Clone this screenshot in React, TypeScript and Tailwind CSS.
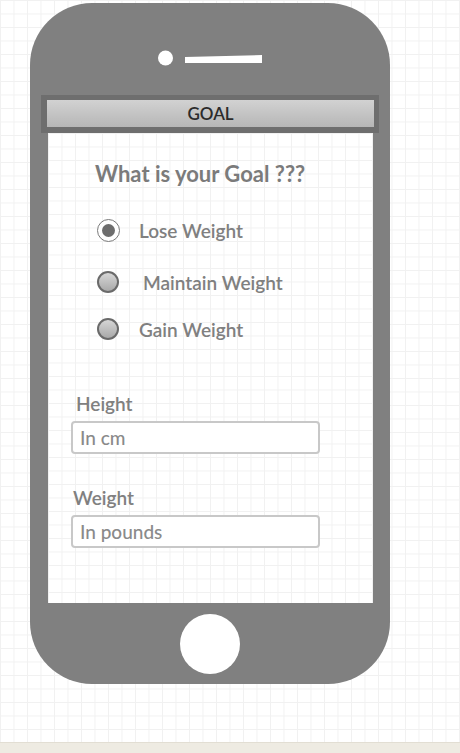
import React from "react";

const gridBg =
  "bg-[linear-gradient(to_right,#f1f1f1_1px,transparent_1px),linear-gradient(to_bottom,#f1f1f1_1px,transparent_1px)] bg-[size:13.5px_13.5px]";

function Radio({ checked }: { checked?: boolean }) {
  if (checked) {
    return (
      <div className="w-[23px] h-[23px] rounded-full border-[1.5px] border-[#7a7a7a] bg-white flex items-center justify-center shrink-0">
        <div className="w-[13px] h-[13px] rounded-full bg-[#6d6d6d]" />
      </div>
    );
  }
  return (
    <div className="w-[22px] h-[22px] rounded-full border-2 border-[#6a6a6a] bg-[linear-gradient(to_bottom,#d6d6d6,#a9a9a9)] shrink-0" />
  );
}

export default function App() {
  return (
    <div className="w-[460px] h-[753px] flex flex-col bg-white overflow-hidden" style={{ fontFamily: "Lato, 'Open Sans', sans-serif" }}>
      <div className={`h-[742px] ${gridBg} pt-[3px] pl-[30px]`}>
        <div className="w-[360px] h-[681px] rounded-[62px] bg-[#808080] flex flex-col">
          <div className="h-[92px] relative">
            <svg width="360" height="92" className="block">
              <circle cx="135.5" cy="55" r="7.5" fill="#fff" />
              <polygon points="155,54 232,52 232,60 155,60" fill="#fff" />
            </svg>
          </div>
          <div className="mx-[11px] h-[38px] bg-[#6e6e6e] pt-[5px] pb-[6px] pl-[6px] pr-[5px]">
            <div className="h-full bg-[linear-gradient(to_bottom,#d2d2d2,#b6b6b6)] flex items-center justify-center text-[17px] font-semibold text-[#2b2b2b] leading-none">
              GOAL
            </div>
          </div>
          <div className={`ml-[18px] mr-[17px] h-[470px] bg-white ${gridBg} flex flex-col`}>
            <div className="pl-[47px] pt-[30px] text-[22px] font-bold text-[#7b7b7b] leading-none">
              What is your Goal ???
            </div>
            <div className="pl-[49px] mt-[33px] flex items-center h-[24px]">
              <Radio checked />
              <span className="ml-[19px] text-[19px] font-semibold text-[#808080] leading-none">Lose Weight</span>
            </div>
            <div className="pl-[49px] mt-[28px] flex items-center h-[24px]">
              <Radio />
              <span className="ml-[24px] text-[19px] font-semibold text-[#808080] leading-none">Maintain Weight</span>
            </div>
            <div className="pl-[49px] mt-[23px] flex items-center h-[24px]">
              <Radio />
              <span className="ml-[20px] text-[19px] font-semibold text-[#808080] leading-none">Gain Weight</span>
            </div>
            <div className="pl-[28px] mt-[53px] text-[19px] font-semibold text-[#808080] leading-none">Height</div>
            <div className="ml-[23px] mt-[8px] w-[249px] h-[33px] border-2 border-[#c8c8c8] rounded-[4px] bg-white flex items-center pl-[7px] text-[19px] font-medium text-[#8a8a8a] leading-none">
              In cm
            </div>
            <div className="pl-[25px] mt-[34px] text-[19px] font-semibold text-[#808080] leading-none">Weight</div>
            <div className="ml-[23px] mt-[8px] w-[249px] h-[33px] border-2 border-[#c8c8c8] rounded-[4px] bg-white flex items-center pl-[7px] text-[19px] font-medium text-[#8a8a8a] leading-none">
              In pounds
            </div>
          </div>
          <div className="flex-1 flex items-center justify-center">
            <div className="w-[60px] h-[60px] rounded-full bg-white" />
          </div>
        </div>
      </div>
      <div className="flex-1 bg-[#eeebe2] border-t border-[#e2ded3]" />
    </div>
  );
}
